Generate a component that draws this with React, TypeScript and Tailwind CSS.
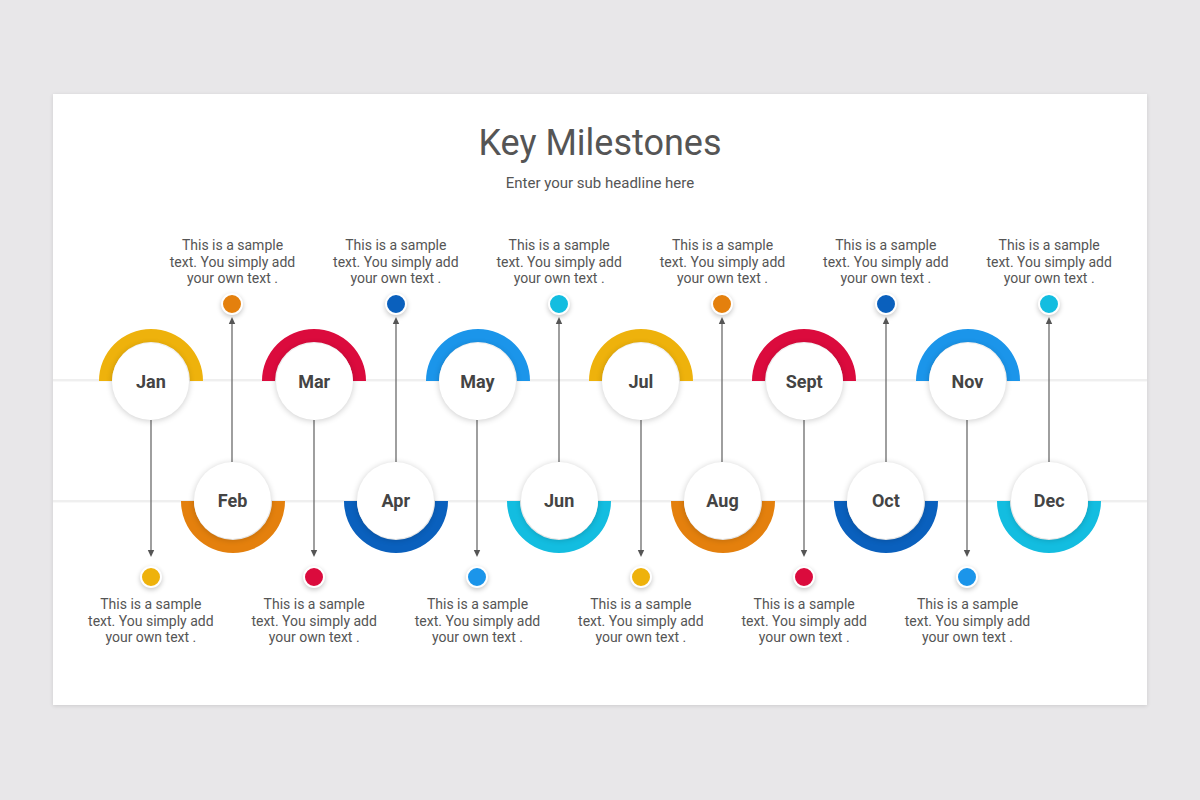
import React from 'react'

type Month = { name: string; color: string }

const months: Month[] = [
  { name: 'Jan', color: '#eeb20c' },
  { name: 'Feb', color: '#e4800d' },
  { name: 'Mar', color: '#db0b3d' },
  { name: 'Apr', color: '#0a60bd' },
  { name: 'May', color: '#1b95ea' },
  { name: 'Jun', color: '#13bde0' },
  { name: 'Jul', color: '#eeb20c' },
  { name: 'Aug', color: '#e4800d' },
  { name: 'Sept', color: '#db0b3d' },
  { name: 'Oct', color: '#0a60bd' },
  { name: 'Nov', color: '#1b95ea' },
  { name: 'Dec', color: '#13bde0' },
]

function Blurb() {
  return (
    <p className="whitespace-nowrap text-center text-[14px] leading-[16.5px] text-[#555]">
      This is a sample
      <br />
      text. You simply add
      <br />
      your own text .
    </p>
  )
}

function Dot({ color }: { color: string }) {
  return (
    <div
      className="h-[22px] w-[22px] shrink-0 rounded-full border-2 border-white shadow-[0_2px_5px_rgba(0,0,0,0.22)]"
      style={{ backgroundColor: color }}
    />
  )
}

// ring half + white disc with the month label
function Node({ month, up }: { month: Month; up: boolean }) {
  const d = up
    ? 'M0 52 A52 52 0 0 1 104 52 L91 52 A39 39 0 0 0 13 52 Z'
    : 'M0 52 A52 52 0 0 0 104 52 L91 52 A39 39 0 0 1 13 52 Z'
  return (
    <div className="relative flex h-[104px] w-[104px] shrink-0 items-center justify-center">
      <svg className="absolute inset-0" width="104" height="104" viewBox="0 0 104 104">
        <path d={d} fill={month.color} />
      </svg>
      <div className="relative flex h-[77px] w-[77px] items-center justify-center rounded-full bg-white shadow-[0_1px_6px_rgba(0,0,0,0.2)]">
        <span className="text-[18px] font-bold text-[#444]">{month.name}</span>
      </div>
    </div>
  )
}

function ArrowUp() {
  return (
    <svg width="10" height="145" viewBox="0 0 10 145" className="shrink-0">
      <line x1="5" y1="5" x2="5" y2="145" stroke="#6b6b6b" strokeWidth="1.3" />
      <path d="M1.8 7 L5 0 L8.2 7 Z" fill="#555" />
    </svg>
  )
}

function ArrowDown() {
  return (
    <svg width="10" height="137" viewBox="0 0 10 137" className="shrink-0">
      <line x1="5" y1="0" x2="5" y2="132" stroke="#6b6b6b" strokeWidth="1.3" />
      <path d="M1.8 130 L5 137 L8.2 130 Z" fill="#555" />
    </svg>
  )
}

function Column({ month, index }: { month: Month; index: number }) {
  const top = index % 2 === 0
  if (top) {
    return (
      <div className="flex flex-col items-center">
        <div className="h-[92px] shrink-0" />
        <Node month={month} up />
        <div className="-mt-[13px] flex flex-col items-center">
          <ArrowDown />
        </div>
        <div className="mt-[9px]">
          <Dot color={month.color} />
        </div>
        <div className="mt-[8px]">
          <Blurb />
        </div>
      </div>
    )
  }
  return (
    <div className="flex flex-col items-center">
      <Blurb />
      <div className="mt-[6px]">
        <Dot color={month.color} />
      </div>
      <div className="mt-[2px]">
        <ArrowUp />
      </div>
      <div className="-mt-[13px]">
        <Node month={month} up={false} />
      </div>
    </div>
  )
}

export default function App() {
  return (
    <div
      className="min-h-[800px] w-full bg-[#e8e7e9] pt-[94px]"
      style={{ fontFamily: 'Roboto, "Liberation Sans", sans-serif' }}
    >
      <div className="mx-auto h-[611px] w-[1094px] bg-white shadow-[0_1px_4px_rgba(0,0,0,0.12)]">
        <div className="pt-[28px] text-center">
          <h1 className="text-[36px] leading-[42px] text-[#555]">Key Milestones</h1>
          <p className="mt-[9px] text-[15px] leading-[20px] text-[#555]">Enter your sub headline here</p>
        </div>

        <div className="relative mt-[44px]">
          <div className="absolute inset-x-0 top-[142px] h-[2px] bg-[#efefef] shadow-[0_1px_1px_rgba(0,0,0,0.03)]" />
          <div className="absolute inset-x-0 top-[263px] h-[2px] bg-[#efefef] shadow-[0_1px_1px_rgba(0,0,0,0.03)]" />
          <div className="relative mx-auto grid w-[980px] grid-cols-12">
            {months.map((m, i) => (
              <Column key={m.name} month={m} index={i} />
            ))}
          </div>
        </div>
      </div>
    </div>
  )
}
